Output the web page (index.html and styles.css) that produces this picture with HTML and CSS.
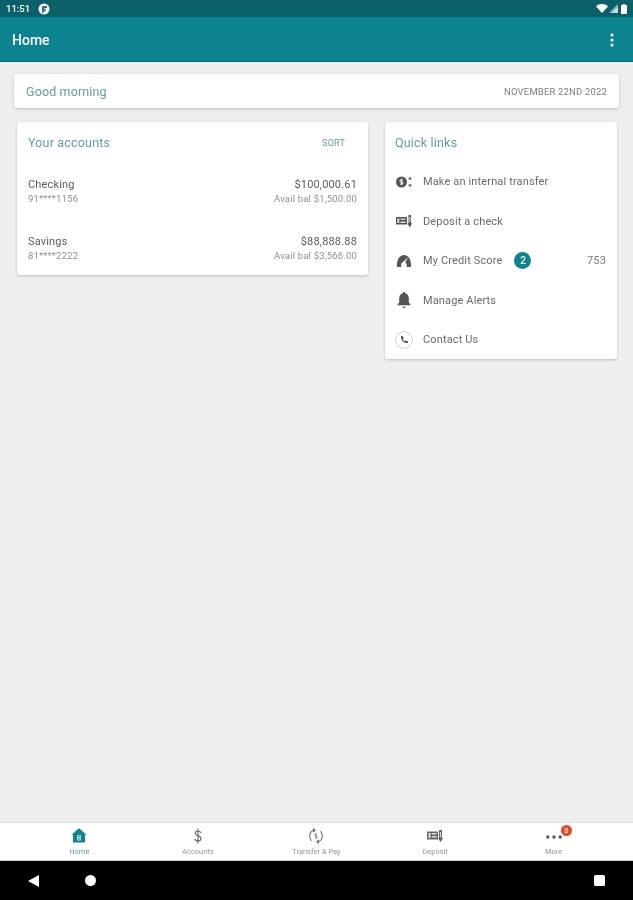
FILE: index.html
```html
<!DOCTYPE html>
<html lang="en">
<head>
<meta charset="utf-8">
<title>Home</title>
<link rel="stylesheet" href="styles.css">
</head>
<body>
<div class="screen">
  <div class="status-bar">
    <span class="clock">11:51</span>
    <svg class="status-app" viewBox="0 0 12 12"><circle cx="6" cy="6" r="5.5" fill="#fff"/><path d="M4 9.5V4.200C4 3.500 4.500 3 5.200 3H9v2H6.400v1.200H8v1.600H6.400v1.700z" fill="#2d6f76"/></svg>
    <span class="status-spacer"></span>
    <svg class="status-wifi" viewBox="0 0 12 9"><path d="M0 2.400C3.400-.8 8.600-.8 12 2.400L6 9z" fill="#fff"/></svg>
    <svg class="status-signal" viewBox="0 0 9 9"><path d="M9 0v9H0z" fill="#fff" opacity=".55"/><path d="M9 3v6H3z" fill="#fff" opacity=".5"/></svg>
    <svg class="status-battery" viewBox="0 0 6 10"><path d="M1.800 0h2.400v1h1.200c.3 0 .6.3.6.6V10H0V1.600C0 1.300.3 1 .6 1h1.200z" fill="#fff"/></svg>
  </div>
  <header class="app-bar">
    <h1 class="app-title">Home</h1>
    <svg class="overflow" viewBox="0 0 4 14"><circle cx="2" cy="2" r="1.600"/><circle cx="2" cy="7" r="1.600"/><circle cx="2" cy="12" r="1.600"/></svg>
  </header>
  <main class="content">
    <section class="card greeting">
      <span class="greeting-text">Good morning</span>
      <span class="date">NOVEMBER 22ND 2022</span>
    </section>
    <div class="columns">
      <section class="card accounts">
        <div class="accounts-head">
          <h2 class="card-title">Your accounts</h2>
          <span class="sort">SORT</span>
        </div>
        <div class="account">
          <div class="acct-col"><span class="acct-name">Checking</span><span class="acct-sub">91****1156</span></div>
          <div class="acct-col acct-right"><span class="acct-name">$100,000.61</span><span class="acct-sub">Avail bal $1,500.00</span></div>
        </div>
        <div class="account">
          <div class="acct-col"><span class="acct-name">Savings</span><span class="acct-sub">81****2222</span></div>
          <div class="acct-col acct-right"><span class="acct-name">$88,888.88</span><span class="acct-sub">Avail bal $3,566.00</span></div>
        </div>
      </section>
      <section class="card links">
        <h2 class="card-title links-title">Quick links</h2>
        <div class="link">
          <svg class="link-icon" viewBox="0 0 18 18"><circle cx="6.500" cy="9" r="5.500" fill="#555"/><path d="M6.500 5.800v6.400M8 7H5.900a.9.9 0 0 0 0 2h1.200a.9.9 0 0 1 0 2H5" stroke="#fff" stroke-width=".9" fill="none"/><path d="M15 3.800l2 2.700h-4zM15 14.200l-2-2.700h4z" fill="#555"/></svg>
          <span class="link-text">Make an internal transfer</span>
        </div>
        <div class="link">
          <svg class="link-icon" viewBox="0 0 18 18"><path d="M1 5h11v7.500H1z" fill="#555"/><path d="M2.300 6.500h2v4.500h-2zM5.500 6.500h5v1.300h-5zM5.500 9.500h5v1.500h-5z" fill="#ddd"/><path d="M13.500 3h2.500v8l1 .5-2.200 4-2.300-4 1-.5z" fill="#555"/><path d="M14.300 5h1v5h-1z" fill="#ddd"/></svg>
          <span class="link-text">Deposit a check</span>
        </div>
        <div class="link">
          <svg class="link-icon" viewBox="0 0 18 18"><path d="M2 15C1.300 8.500 4.500 3 9 3s7.700 5.500 7 12h-4.500c.9-1.900-.1-3.700-1.300-4.500L13 5.500 8.300 9.800c-1.700.5-2.800 3.200-1.800 5.200z" fill="#555"/></svg>
          <span class="link-text">My Credit Score</span>
          <span class="count">2</span>
          <span class="score">753</span>
        </div>
        <div class="link">
          <svg class="link-icon" viewBox="0 0 18 18"><path d="M9 1c.8 0 1.300.6 1.300 1.300 2.500.6 3.500 2.800 3.500 5.200v4l1.700 2v.8h-13v-.8l1.700-2v-4c0-2.400 1-4.600 3.500-5.200C7.700 1.600 8.200 1 9 1z" fill="#555"/><path d="M7.500 15.800h3a1.500 1.500 0 0 1-3 0z" fill="#555"/></svg>
          <span class="link-text">Manage Alerts</span>
        </div>
        <div class="link">
          <svg class="link-icon" viewBox="0 0 18 18"><circle cx="9" cy="9" r="8.300" fill="none" stroke="#c4c4c4" stroke-width=".8"/><path d="M6 5.300l1.300-.5 1.300 2.200-.9.9c.5 1.100 1.200 1.900 2.400 2.400l.9-.9 2.200 1.300-.5 1.300c-3.800.3-7-2.900-6.700-6.700z" fill="#444"/></svg>
          <span class="link-text">Contact Us</span>
        </div>
      </section>
    </div>
  </main>
  <nav class="tabs">
    <div class="tab tab-active">
      <svg class="tab-icon" viewBox="0 0 18 18"><path d="M9 2L15 7.500V15.500H3V7.500z" fill="#0d8390"/><path d="M9 2L2.500 8M9 2l6.500 6" stroke="#0d8390" stroke-width="1.400"/><path d="M7.200 8h3.600v5.500H7.200z" fill="#cfe6e9"/><path d="M8 9.300h2M8 12h2" stroke="#0d8390"/></svg>
      <span class="tab-label">Home</span>
    </div>
    <div class="tab">
      <svg class="tab-icon" viewBox="0 0 18 18"><path d="M11.800 6C11.400 4.500 10.300 4 9 4c-1.700 0-2.800 1-2.800 2.300 0 3.200 5.800 1.900 5.800 5.200 0 1.400-1.200 2.500-3 2.500-1.600 0-2.800-.8-3.100-2.200M9 1.500v15" fill="none" stroke="#666" stroke-width="1.100"/></svg>
      <span class="tab-label">Accounts</span>
    </div>
    <div class="tab">
      <svg class="tab-icon" viewBox="0 0 18 18"><path d="M4.500 13.800A6.800 6.800 0 0 1 6.500 3M13.500 4.200A6.800 6.800 0 0 1 11.500 15" fill="none" stroke="#777" stroke-width="1.100"/><path d="M6 .8l3 2.600-3 2.400zM12 17.200l-3-2.600 3-2.400z" fill="#777"/><path d="M9 5.800v6.400M10.200 7.200H8.500a.9.900 0 0 0 0 1.800h1a.9.900 0 0 1 0 1.800H7.800" fill="none" stroke="#888" stroke-width=".8"/></svg>
      <span class="tab-label">Transfer &amp; Pay</span>
    </div>
    <div class="tab">
      <svg class="tab-icon" viewBox="0 0 18 18"><path d="M1 4.500h11v8H1z" fill="#666"/><path d="M2.500 6h2v5h-2zM5.800 6h4.700v1.500H5.800zM5.800 9h4.700v1.500H5.800z" fill="#ddd"/><path d="M13 3h3v8l1 .5-2.500 3.500-2.500-3.500 1-.5z" fill="#666"/><path d="M14 5h1v5h-1z" fill="#ddd"/></svg>
      <span class="tab-label">Deposit</span>
    </div>
    <div class="tab">
      <span class="tab-badge-wrap">
        <svg class="tab-icon" viewBox="0 0 18 18"><circle cx="2.800" cy="10" r="1.700" fill="#555"/><circle cx="9" cy="10" r="1.700" fill="#555"/><circle cx="15.200" cy="10" r="1.700" fill="#555"/></svg>
        <span class="badge">3</span>
      </span>
      <span class="tab-label">More</span>
    </div>
  </nav>
  <div class="nav-bar">
    <svg class="nav-back" viewBox="0 0 11 12"><path d="M11 0v12L0 6z"/></svg>
    <span class="nav-home"></span>
    <span class="nav-recent"></span>
  </div>
</div>
</body>
</html>
```

FILE: styles.css
```css
* { box-sizing: border-box; }
html, body { margin: 0; padding: 0; }
body { font-family: Roboto, "Noto Sans", sans-serif; }

.screen {
  width: 633px;
  height: 900px;
  display: flex;
  flex-direction: column;
  background: #eeeeee;
  overflow: hidden;
  filter: blur(.45px);
}

.status-bar {
  height: 17px;
  flex: none;
  display: flex;
  align-items: center;
  padding: 0 6px;
  background: #0b5f69;
  color: #fff;
}
.clock { font-size: 9.5px; font-weight: 500; }
.status-app { width: 12px; height: 12px; margin-left: 8px; }
.status-spacer { flex: 1; }
.status-wifi { width: 12px; height: 9px; }
.status-signal { width: 9px; height: 9px; margin-left: 1px; }
.status-battery { width: 6px; height: 10px; margin-left: 3px; }

.app-bar {
  height: 45px;
  flex: none;
  display: flex;
  align-items: center;
  justify-content: space-between;
  padding: 2px 19px 0 12px;
  background: #0d8390;
  border-bottom: 1px solid #0a6a75;
}
.app-title { margin: 0; font-size: 14px; font-weight: 500; color: #fff; }
.overflow { width: 4px; height: 14px; fill: #f2f7f8; }

.content {
  flex: 1;
  min-height: 0;
  padding: 12px 14px 0;
}
.card {
  background: #fff;
  border-radius: 3px;
  box-shadow: 0 1px 3px rgba(0, 0, 0, .2);
}
.greeting {
  height: 34px;
  display: flex;
  align-items: center;
  justify-content: space-between;
  padding: 0 12px;
}
.greeting-text { font-size: 12.5px; color: #5f9ea5; letter-spacing: .13px; }
.date { font-size: 9.5px; color: #7d7d7d; letter-spacing: .17px; }

.columns {
  display: grid;
  grid-template-columns: 351px 232px;
  column-gap: 17px;
  align-items: start;
  margin: 14px 2px 0 3px;
}
.card-title { margin: 0; font-size: 12.5px; font-weight: 400; color: #5f9ea5; letter-spacing: .18px; }

.accounts { height: 153px; padding: 0 11px; }
.accounts-head {
  height: 41px;
  display: flex;
  align-items: center;
  justify-content: space-between;
  padding-right: 12px;
}
.sort { font-size: 9px; color: #5f9ea5; letter-spacing: .2px; }
.account {
  height: 57px;
  display: flex;
  justify-content: space-between;
  padding-top: 14.500px;
}
.acct-col { display: flex; flex-direction: column; }
.acct-right { align-items: flex-end; }
.acct-name { font-size: 11px; line-height: 14px; color: #5c5c5c; letter-spacing: .17px; }
.acct-sub { font-size: 9.5px; line-height: 14px; color: #8f8f8f; letter-spacing: .18px; }

.links { height: 237px; padding: 0 11px 0 10px; }
.links-title { height: 40px; line-height: 41px; }
.link {
  height: 39.500px;
  display: flex;
  align-items: center;
}
.link-icon { width: 18px; height: 18px; flex: none; }
.link-text { margin-left: 10px; font-size: 11px; color: #6a6a6a; letter-spacing: .14px; }
.count {
  width: 17px;
  height: 17px;
  margin-left: 12px;
  border-radius: 50%;
  background: #0d8390;
  color: #fff;
  font-size: 10px;
  font-weight: 500;
  display: flex;
  align-items: center;
  justify-content: center;
}
.score { margin-left: auto; font-size: 11px; color: #7d7d7d; letter-spacing: .14px; }

.tabs {
  height: 39px;
  flex: none;
  display: grid;
  grid-template-columns: repeat(5, 1fr);
  padding: 0 20px;
  background: #fff;
  border-top: 1px solid #e2e2e2;
  border-bottom: 1px solid #ccc;
}
.tab {
  display: flex;
  flex-direction: column;
  align-items: center;
  padding-top: 4px;
  color: #969696;
}
.tab-icon { width: 18px; height: 18px; display: block; }
.tab-label { font-size: 7.500px; line-height: 13px; }
.tab-active .tab-label { color: #5f9ea5; }
.tab-badge-wrap { position: relative; display: block; }
.badge {
  position: absolute;
  top: -2px;
  right: -9px;
  width: 11px;
  height: 11px;
  border-radius: 50%;
  background: #ee4422;
  color: #fff;
  font-size: 7px;
  font-weight: 700;
  display: flex;
  align-items: center;
  justify-content: center;
}

.nav-bar {
  height: 39px;
  flex: none;
  display: flex;
  align-items: center;
  background: #000;
  padding: 0 28px;
}
.nav-back { width: 11px; height: 12px; fill: #fff; }
.nav-home {
  width: 11px;
  height: 11px;
  margin-left: 46px;
  border-radius: 50%;
  background: #fff;
}
.nav-recent {
  width: 11px;
  height: 11px;
  margin-left: auto;
  border-radius: 1.500px;
  background: #fff;
}
```
